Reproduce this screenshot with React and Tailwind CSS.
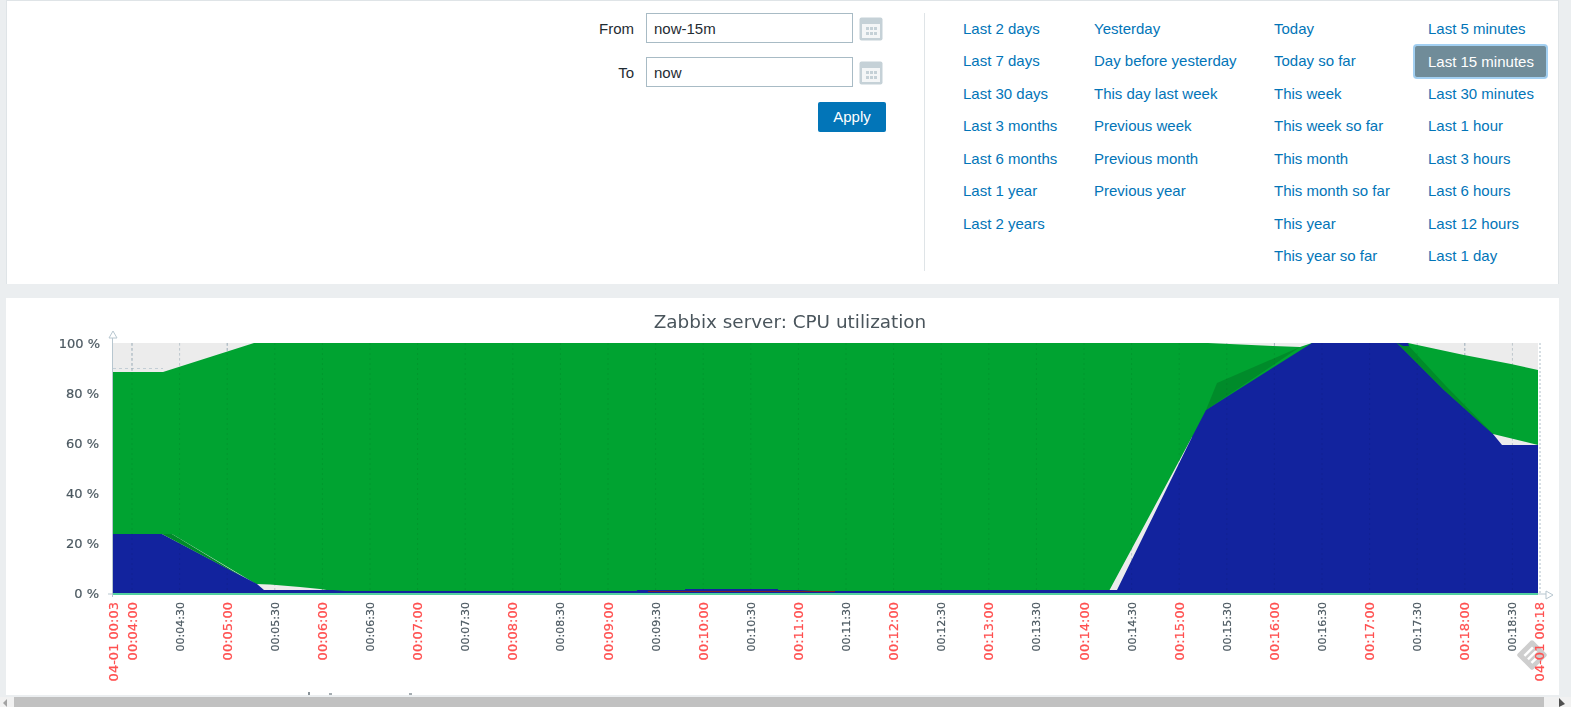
import React from "react";

const COLUMNS = [
  { width: "w-[131px]", items: ["Last 2 days", "Last 7 days", "Last 30 days", "Last 3 months", "Last 6 months", "Last 1 year", "Last 2 years"] },
  { width: "w-[180px]", items: ["Yesterday", "Day before yesterday", "This day last week", "Previous week", "Previous month", "Previous year"] },
  { width: "w-[154px]", items: ["Today", "Today so far", "This week", "This week so far", "This month", "This month so far", "This year", "This year so far"] },
  { width: "w-[130px]", items: ["Last 5 minutes", "Last 15 minutes", "Last 30 minutes", "Last 1 hour", "Last 3 hours", "Last 6 hours", "Last 12 hours", "Last 1 day"] },
];

const CalendarIcon = () => (
  <svg width="24" height="24" viewBox="0 0 24 24" className="ml-[6px] mt-[2px] shrink-0">
    <rect x="0.5" y="0.5" width="23" height="23" rx="2" fill="#c5d1d7" />
    <rect x="3" y="7" width="18" height="14" fill="#f4f6f7" />
    {[8, 12, 16].map((x) =>
      [11, 16].map((y) => <rect key={x + "-" + y} x={x - 1} y={y - 1} width="3" height="3" fill="#c5d1d7" />)
    )}
  </svg>
);

const DateRow = ({ label, value }) => (
  <div className="flex items-center h-[30px]">
    <span className="w-[53px] mr-[12px] mt-[2px] text-right text-[#1f2c33]">{label}</span>
    <input
      readOnly
      value={value}
      className="w-[207px] h-[30px] border border-[#a8bbc5] bg-white px-[7px] text-[15px] text-[#1f2c33] outline-none"
    />
    <CalendarIcon />
  </div>
);

const QuickLink = ({ text }) =>
  text === "Last 15 minutes" ? (
    <span className="block -ml-[14px] w-[133px] h-[33px] leading-[31px] pl-[13px] rounded-[3px] bg-[#708c99] border border-[#a3d0f2] ring-1 ring-[#a3d0f2] text-white whitespace-nowrap -mb-[0.5px]">
      {text}
    </span>
  ) : (
    <span className="block h-[32.5px] leading-[32.5px] text-[#0275b8] whitespace-nowrap">{text}</span>
  );

const FilterPanel = () => (
  <div className="h-[284px] ml-[6px] mr-[12px] bg-white border-x border-t border-[#dfe4e7] flex font-['Liberation_Sans',Arial,sans-serif] text-[15px]">
    <div className="w-[880px] pt-[12px] pl-[576px] shrink-0">
      <div className="flex flex-col gap-[14px] w-[300px]">
        <DateRow label="From" value="now-15m" />
        <DateRow label="To" value="now" />
      </div>
      <div className="w-[303px] flex justify-end mt-[15px]">
        <button className="w-[68px] h-[30px] rounded-[2px] bg-[#0275b8] text-white text-[15px]">Apply</button>
      </div>
    </div>
    <div className="mt-[12px] ml-[37px] w-px h-[258px] bg-[#dfe4e7]" />
    <div className="flex pl-[38px] pt-[11.5px]">
      {COLUMNS.map((col) => (
        <div key={col.items[0]} className={col.width}>
          {col.items.map((t) => (
            <QuickLink key={t} text={t} />
          ))}
        </div>
      ))}
    </div>
  </div>
);

const fmt = (i) => {
  // tick 0 is 00:04:00, one tick every 30 seconds
  const sec = 240 + i * 30;
  const m = String(Math.floor(sec / 60)).padStart(2, "0");
  const s = String(sec % 60).padStart(2, "0");
  return `00:${m}:${s}`;
};

const TICKS = Array.from({ length: 30 }, (_, i) => ({ x: 132 + i * 47.6, label: fmt(i), major: i % 2 === 0 }));

const GREEN =
  "113,372 163,372 254,343 1208,343 1273,346 1300,347 1312,343 1408,343 1464,355 1511,364 1538,370 1538,445 1493,434 1300,500 1192,437 1109,591 333,591 320,589 300,587 270,584.5 256,584 172,534 113,534";
const BLUE =
  "113,534 162,534 257,584 264,590 333,590 345,591 637,591 637,590 685,590 685,589 778,589 778,590 800,590 815,591 920,591 920,590 1113,590 1117,590 1192,437 1206,410 1312,343 1397,343 1444,390 1493,434 1502,445 1538,445 1538,593 113,593";

const CpuGraph = () => (
  <svg width="1553" height="397" viewBox="6 298 1553 397" className="block blur-[0.4px]">
    <text x="790" y="328" textAnchor="middle" fontFamily="'DejaVu Sans', sans-serif" fontSize="18.4" fill="#4a555c">
      Zabbix server: CPU utilization
    </text>

    <rect x="113" y="343" width="1425" height="250" fill="#ececec" />
    <line x1="113" y1="368.5" x2="163" y2="368.5" stroke="#c3ced5" strokeDasharray="3 3" />
    {TICKS.map((t) => (
      <line key={t.label} x1={t.x} y1="343" x2={t.x} y2="593" stroke={t.major ? "#a9bac5" : "#ccd5db"} strokeDasharray="3 2" />
    ))}

    <polygon points={GREEN} fill="#00a331" />
    <polygon points={BLUE} fill="#12239e" />
    <polygon points="162,534 172,534 243,577" fill="#008b2a" />
    <polygon points="1206,410 1217,383 1300,347" fill="#008b2a" />
    <polygon points="1397,343 1408,345 1445,385 1493,434 1444,390" fill="#008b2a" />
    <polygon points="1397,343 1408,343 1409,346 1403,346" fill="#12239e" />
    <polygon points="648,592 835,592 835,591 648,591" fill="#7e1d2a" />

    {TICKS.map((t) => (
      <line key={t.label} x1={t.x} y1="343" x2={t.x} y2="593" stroke="#000" strokeOpacity="0.07" strokeDasharray="2 3" />
    ))}

    {/* axes */}
    <line x1="1540" y1="343" x2="1540" y2="593" stroke="#c9d4da" strokeWidth="1.5" strokeDasharray="2 2" />
    <line x1="112.5" y1="338" x2="112.5" y2="597" stroke="#b7c6cf" />
    <polygon points="113,331 117,338 109,338" fill="#fff" stroke="#b7c6cf" />
    <line x1="108" y1="594" x2="113" y2="594" stroke="#b7c6cf" />
    <line x1="113" y1="594" x2="1546" y2="594" stroke="#b7c6cf" />
    <polygon points="1553,595 1546,591 1546,599" fill="#fff" stroke="#b7c6cf" />
    <rect x="113" y="593" width="1425" height="2" fill="#52d0a0" />

    <g fontFamily="'DejaVu Sans', sans-serif" fontSize="13" fill="#4b5860" stroke="#4b5860" strokeWidth="0.2" textAnchor="end">
      {[100, 80, 60, 40, 20, 0].map((v, i) => (
        <text key={v} x={v === 100 ? 100 : 99} y={347.5 + i * 50}>
          {v} %
        </text>
      ))}
    </g>

    {/* watermark icon */}
    <g transform="rotate(-45 1532 655)" opacity="0.9">
      <rect x="1521" y="644" width="22" height="22" rx="2" fill="#c9c9c9" />
      <rect x="1526" y="649" width="12" height="2.5" fill="#fff" />
      <rect x="1526" y="654" width="12" height="2.5" fill="#fff" />
      <rect x="1526" y="659" width="7" height="2.5" fill="#fff" />
    </g>

    <g fontFamily="'DejaVu Sans', sans-serif" textAnchor="end" strokeWidth="0.2">
      {TICKS.map((t) => (
        <text
          key={t.label}
          transform={`translate(${t.x + (t.major ? 4.5 : 4)} 602) rotate(-90)`}
          fontSize={t.major ? 13 : 11}
          fill={t.major ? "#ff5050" : "#4b5860"}
          stroke={t.major ? "#ff5050" : "#4b5860"}
        >
          {t.label}
        </text>
      ))}
      <text transform="translate(118 602) rotate(-90)" fontSize="13" fill="#ff5050" stroke="#ff5050">
        04-01 00:03
      </text>
      <text transform="translate(1544 602) rotate(-90)" fontSize="13" fill="#ff5050" stroke="#ff5050">
        04-01 00:18
      </text>
    </g>

    <rect x="308" y="692" width="2" height="3" fill="#8a949a" />
    <rect x="329" y="693" width="3" height="2" fill="#a5adb2" />
    <rect x="409" y="693" width="3" height="2" fill="#a5adb2" />
  </svg>
);

const Scrollbar = () => (
  <div className="h-[10px] bg-[#f1f1f1] flex items-center">
    <svg width="14" height="10" viewBox="0 0 14 10" className="shrink-0">
      <polygon points="3,6 7,2 7,10" fill="#a3a3a3" />
    </svg>
    <div className="w-[1530px] h-full bg-[#c1c1c1]" />
    <svg width="27" height="10" viewBox="0 0 27 10" className="shrink-0">
      <polygon points="15,1 15,10 21,7" fill="#505050" />
    </svg>
  </div>
);

export default function App() {
  return (
    <div className="w-full h-[707px] overflow-hidden bg-[#ebeef0] flex flex-col">
      <FilterPanel />
      <div className="h-[397px] mt-[14px] ml-[6px] mr-[12px] bg-white overflow-hidden">
        <CpuGraph />
      </div>
      <div className="h-[2px]" />
      <Scrollbar />
    </div>
  );
}
